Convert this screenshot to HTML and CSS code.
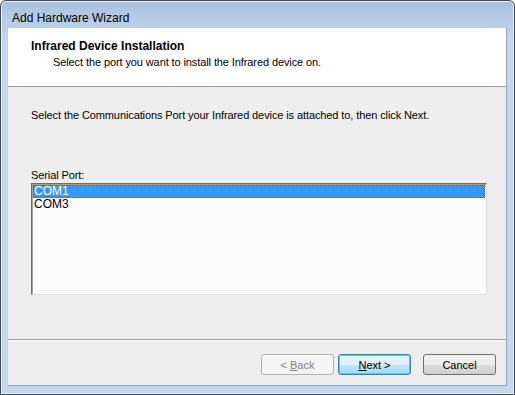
FILE: index.html
```html
<!DOCTYPE html>
<html lang="en">
<head>
  <meta charset="UTF-8" />
  <title>Add Hardware Wizard</title>
  <link rel="stylesheet" href="styles.css">
</head>
<body>
  <div class="window">
    <div class="title-bar">Add Hardware Wizard</div>
    <div class="client">
      <div class="wizard-header">
        <div class="header-title">Infrared Device Installation</div>
        <div class="header-sub">Select the port you want to install the Infrared device on.</div>
      </div>
      <div class="wizard-body">
        <p class="instructions">Select the Communications Port your Infrared device is attached to, then click Next.</p>
        <label class="field-label">Serial Port:</label>
        <div class="listbox">
          <div class="list-item selected">COM1</div>
          <div class="list-item">COM3</div>
        </div>
      </div>
      <div class="wizard-footer">
        <button class="btn" disabled>&lt; <u>B</u>ack</button>
        <button class="btn default"><u>N</u>ext &gt;</button>
        <button class="btn cancel">Cancel</button>
      </div>
    </div>
  </div>
</body>
</html>
```

FILE: styles.css
```css
* { margin: 0; padding: 0; box-sizing: border-box; }
body {
  font-family: 'Liberation Sans', Arial, sans-serif;
  font-size: 11px;
  letter-spacing: -0.1px;
  background: #fff;
  width: 515px;
  height: 395px;
  overflow: hidden;
  color: #000;
}
.window {
  width: 515px;
  height: 395px;
  border: 1px solid #404a58;
  border-radius: 6px 6px 0 0;
  background: linear-gradient(to bottom, #a9c2de 0, #c4d7ec 40px, #c4d7ec 100%);
  padding: 0 7px 8px 7px;
  display: flex;
  flex-direction: column;
  box-shadow: inset 0 0 0 1px #e6eef8;
}
.title-bar {
  height: 27px;
  padding: 10px 0 0 4px;
  font-size: 12px;
  line-height: 14px;
  letter-spacing: 0;
  color: #000;
}
.client {
  flex: 1;
  display: flex;
  flex-direction: column;
  background: #eeeeee;
  border: 1px solid #8da4bf;
  border-width: 0 1px 1px 0;
}
.wizard-header {
  height: 59px;
  background: #fff;
  border-bottom: 1px solid #a0a0a0;
  padding: 11px 0 0 23px;
}
.header-title {
  font-size: 12px;
  letter-spacing: 0;
  font-weight: bold;
  line-height: 14px;
}
.header-sub {
  padding-left: 22px;
  line-height: 16px;
  margin-top: 1px;
}
.wizard-body {
  flex: 1;
  padding: 21px 20px 0 23px;
  display: flex;
  flex-direction: column;
  border-bottom: 1px solid #a0a0a0;
  box-shadow: 0 1px 0 #fff;
}
.instructions {
  line-height: 14px;
}
.field-label {
  margin-top: 46px;
  line-height: 14px;
}
.listbox {
  margin-top: 1px;
  width: 456px;
  height: 112px;
  background: #fcfcfc;
  border-top: 1px solid #6e6e6e;
  border-left: 1px solid #6e6e6e;
  border-right: 1px solid #dcdcdc;
  border-bottom: 1px solid #dcdcdc;
  box-shadow: inset 1px 1px 0 #a0a0a0;
  padding: 1px;
}
.list-item {
  height: 13px;
  line-height: 13px;
  padding-left: 1px;
  font-size: 12px;
  letter-spacing: 0;
}
.list-item.selected {
  background: #3399ff;
  color: #fff;
  outline: 1px dotted #7a5a2a;
  outline-offset: -1px;
}
.wizard-footer {
  height: 45px;
  display: flex;
  justify-content: flex-end;
  align-items: flex-start;
  padding: 14px 10px 0 0;
  gap: 4px;
}
.btn {
  width: 73px;
  height: 21px;
  font-family: inherit;
  font-size: 11px;
  border: 1px solid #707070;
  border-radius: 3px;
  background: linear-gradient(to bottom, #f2f2f2 0, #ebebeb 50%, #dddddd 51%, #cfcfcf 100%);
  color: #000;
}
.btn[disabled] {
  border-color: #adb2b5;
  background: #f4f4f4;
  color: #838383;
}
.btn.default {
  border-color: #3c7fb1;
  background: linear-gradient(to bottom, #eaf6fd 0, #d9f0fc 50%, #bee6fd 51%, #a7d9f5 100%);
  box-shadow: inset 0 0 0 1px #48d0f5;
}
.btn.cancel {
  margin-left: 8px;
}
```
